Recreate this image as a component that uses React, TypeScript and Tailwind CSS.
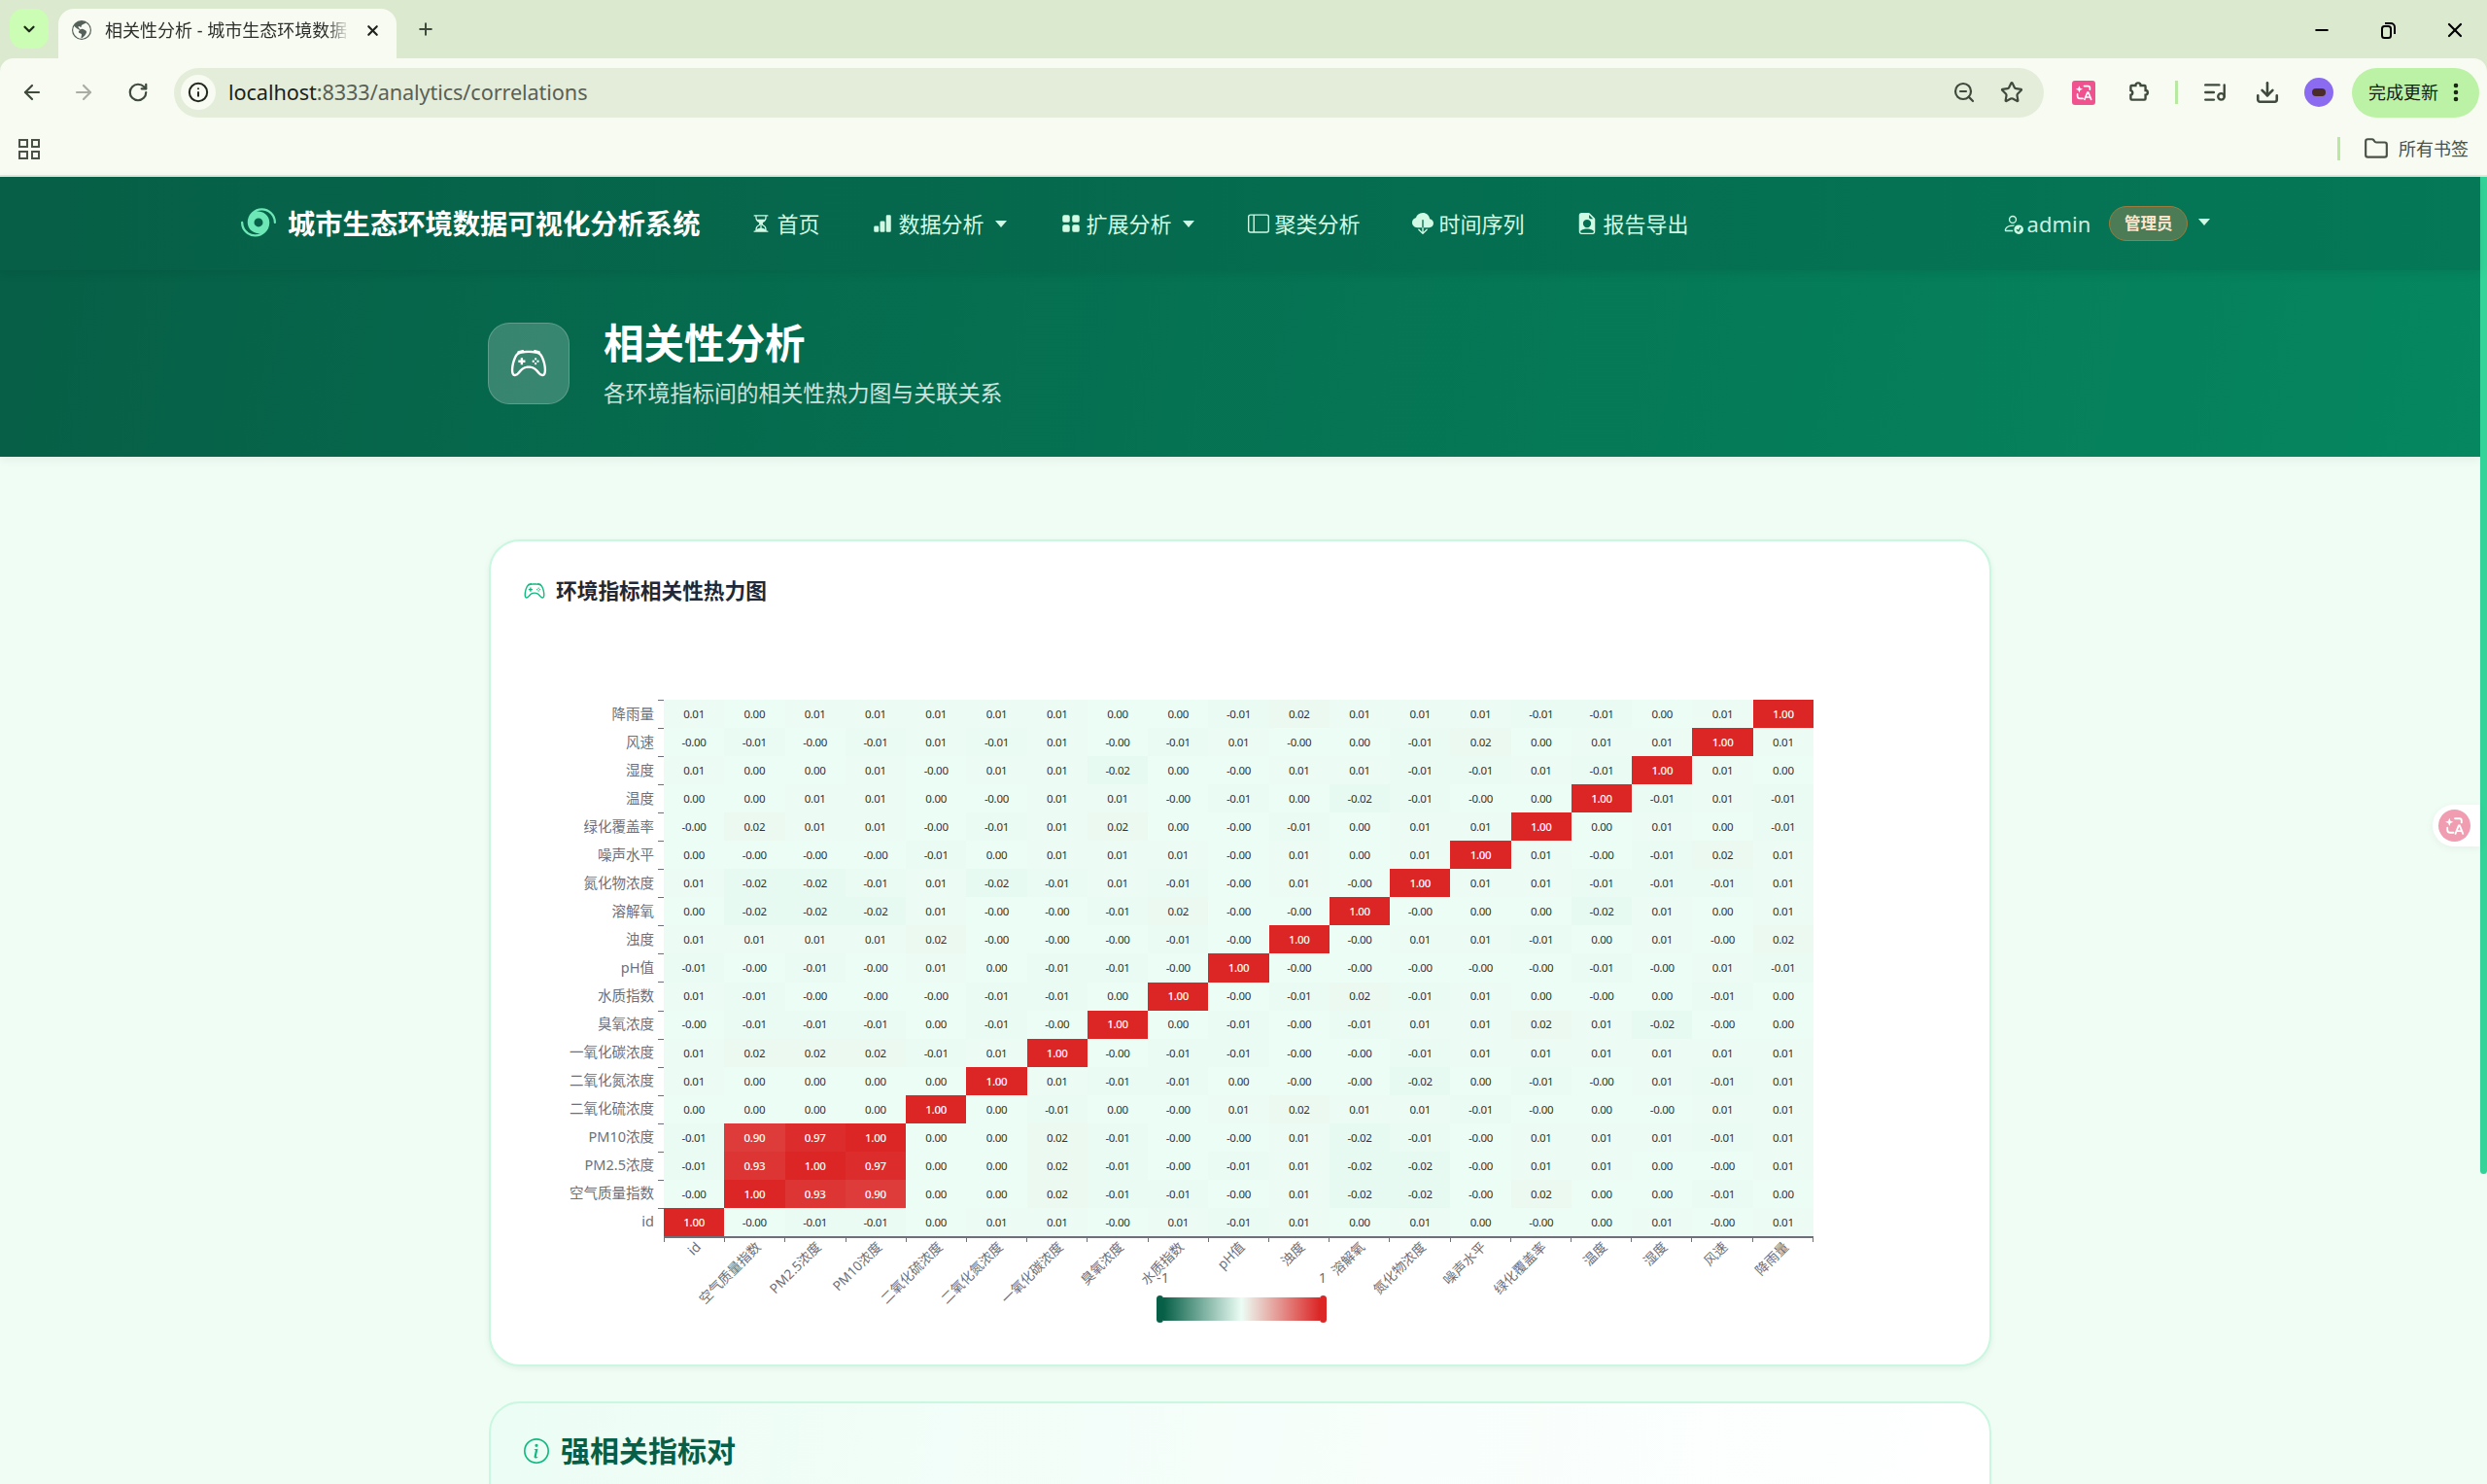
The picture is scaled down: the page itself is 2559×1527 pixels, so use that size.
import {
  ArrowLeft,
  ArrowRight,
  RotateCw,
  Info,
  ZoomOut,
  Star,
  ListMusic,
  Download,
  Folder,
  Plus,
  X,
  Minus,
  ChevronDown,
  EllipsisVertical,
} from "lucide-react";
import {
  BsHurricane,
  BsHourglassSplit,
  BsBarChartFill,
  BsGridFill,
  BsLayoutSidebar,
  BsCloudDownloadFill,
  BsFileEarmarkPersonFill,
  BsPersonCheck,
  BsController,
  BsInfoCircle,
  BsGlobeAmericas,
} from "react-icons/bs";

const yLabels = [
  "降雨量",
  "风速",
  "湿度",
  "温度",
  "绿化覆盖率",
  "噪声水平",
  "氮化物浓度",
  "溶解氧",
  "浊度",
  "pH值",
  "水质指数",
  "臭氧浓度",
  "一氧化碳浓度",
  "二氧化氮浓度",
  "二氧化硫浓度",
  "PM10浓度",
  "PM2.5浓度",
  "空气质量指数",
  "id",
];

const xLabels = [...yLabels].reverse();

const rows = [
  "0.01 0.00 0.01 0.01 0.01 0.01 0.01 0.00 0.00 -0.01 0.02 0.01 0.01 0.01 -0.01 -0.01 0.00 0.01 1.00",
  "-0.00 -0.01 -0.00 -0.01 0.01 -0.01 0.01 -0.00 -0.01 0.01 -0.00 0.00 -0.01 0.02 0.00 0.01 0.01 1.00 0.01",
  "0.01 0.00 0.00 0.01 -0.00 0.01 0.01 -0.02 0.00 -0.00 0.01 0.01 -0.01 -0.01 0.01 -0.01 1.00 0.01 0.00",
  "0.00 0.00 0.01 0.01 0.00 -0.00 0.01 0.01 -0.00 -0.01 0.00 -0.02 -0.01 -0.00 0.00 1.00 -0.01 0.01 -0.01",
  "-0.00 0.02 0.01 0.01 -0.00 -0.01 0.01 0.02 0.00 -0.00 -0.01 0.00 0.01 0.01 1.00 0.00 0.01 0.00 -0.01",
  "0.00 -0.00 -0.00 -0.00 -0.01 0.00 0.01 0.01 0.01 -0.00 0.01 0.00 0.01 1.00 0.01 -0.00 -0.01 0.02 0.01",
  "0.01 -0.02 -0.02 -0.01 0.01 -0.02 -0.01 0.01 -0.01 -0.00 0.01 -0.00 1.00 0.01 0.01 -0.01 -0.01 -0.01 0.01",
  "0.00 -0.02 -0.02 -0.02 0.01 -0.00 -0.00 -0.01 0.02 -0.00 -0.00 1.00 -0.00 0.00 0.00 -0.02 0.01 0.00 0.01",
  "0.01 0.01 0.01 0.01 0.02 -0.00 -0.00 -0.00 -0.01 -0.00 1.00 -0.00 0.01 0.01 -0.01 0.00 0.01 -0.00 0.02",
  "-0.01 -0.00 -0.01 -0.00 0.01 0.00 -0.01 -0.01 -0.00 1.00 -0.00 -0.00 -0.00 -0.00 -0.00 -0.01 -0.00 0.01 -0.01",
  "0.01 -0.01 -0.00 -0.00 -0.00 -0.01 -0.01 0.00 1.00 -0.00 -0.01 0.02 -0.01 0.01 0.00 -0.00 0.00 -0.01 0.00",
  "-0.00 -0.01 -0.01 -0.01 0.00 -0.01 -0.00 1.00 0.00 -0.01 -0.00 -0.01 0.01 0.01 0.02 0.01 -0.02 -0.00 0.00",
  "0.01 0.02 0.02 0.02 -0.01 0.01 1.00 -0.00 -0.01 -0.01 -0.00 -0.00 -0.01 0.01 0.01 0.01 0.01 0.01 0.01",
  "0.01 0.00 0.00 0.00 0.00 1.00 0.01 -0.01 -0.01 0.00 -0.00 -0.00 -0.02 0.00 -0.01 -0.00 0.01 -0.01 0.01",
  "0.00 0.00 0.00 0.00 1.00 0.00 -0.01 0.00 -0.00 0.01 0.02 0.01 0.01 -0.01 -0.00 0.00 -0.00 0.01 0.01",
  "-0.01 0.90 0.97 1.00 0.00 0.00 0.02 -0.01 -0.00 -0.00 0.01 -0.02 -0.01 -0.00 0.01 0.01 0.01 -0.01 0.01",
  "-0.01 0.93 1.00 0.97 0.00 0.00 0.02 -0.01 -0.00 -0.01 0.01 -0.02 -0.02 -0.00 0.01 0.01 0.00 -0.00 0.01",
  "-0.00 1.00 0.93 0.90 0.00 0.00 0.02 -0.01 -0.01 -0.00 0.01 -0.02 -0.02 -0.00 0.02 0.00 0.00 -0.01 0.00",
  "1.00 -0.00 -0.01 -0.01 0.00 0.01 0.01 -0.00 0.01 -0.01 0.01 0.00 0.01 0.00 -0.00 0.00 0.01 -0.00 0.01",
].map((r) => r.split(" "));

// same scale as the colour bar: #065f46 -> #ecfdf5 -> #dc2626
const cellColor = (v: number) => {
  const mid = [236, 253, 245];
  const end = v < 0 ? [6, 95, 70] : [220, 38, 38];
  const t = Math.min(Math.abs(v), 1);
  const c = mid.map((m, i) => Math.round(m + (end[i] - m) * t));
  return `rgb(${c[0]},${c[1]},${c[2]})`;
};

const TranslateGlyph = ({ className }: { className: string }) => (
  <svg viewBox="0 0 24 24" className={className} fill="none" stroke="#fff" strokeWidth="1.8">
    <path d="M7 4.5l1.1 2.9L11 8.5 8.1 9.6 7 12.5 5.9 9.6 3 8.5l2.9-1.1z" fill="#fff" stroke="none" />
    <path d="M12.5 5H17a2 2 0 0 1 2 2v2" strokeLinecap="round" />
    <path d="M5 14v2a3 3 0 0 0 3 3h3" strokeLinecap="round" />
    <path d="M13 20l3.2-8h1l3.2 8M14.2 17.4h5" strokeLinecap="round" />
  </svg>
);

const ToolbarChrome = () => (
  <div className="bg-[#dbe9cf] text-[#3f4a3c]">
    <div className="flex h-[60px] items-start">
      <div className="ml-[10px] mt-[9px] flex h-[41px] w-[40px] items-center justify-center rounded-[14px] bg-[#ccfdb4]">
        <ChevronDown className="h-[18px] w-[18px] text-[#1b2a18]" strokeWidth={3} />
      </div>
      <div className="ml-[10px] mt-[9px] flex h-[51px] w-[348px] items-center rounded-t-[16px] bg-[#f8fbf2] pb-[7px] pl-[14px]">
        <BsGlobeAmericas className="h-[20px] w-[20px] text-[#55605a]" />
        <span className="ml-[14px] w-[252px] overflow-hidden whitespace-nowrap text-[18px] leading-[24px] text-[#2d2f2b] [mask-image:linear-gradient(90deg,#000_90%,transparent)]">
          相关性分析 - 城市生态环境数据
        </span>
        <X className="ml-[15px] h-[17px] w-[17px] text-[#1f231e]" strokeWidth={3} />
      </div>
      <Plus className="ml-[20px] mt-[20px] h-[20px] w-[20px] text-[#3f4a3c]" strokeWidth={2.4} />
      <div className="ml-auto mt-[19px] flex items-center">
        <Minus className="mr-[48px] h-[20px] w-[20px] text-black" strokeWidth={2.4} />
        <svg viewBox="0 0 20 20" className="mr-[47px] h-[20px] w-[20px]" fill="none" stroke="#000" strokeWidth="2">
          <rect x="4" y="6" width="9" height="12" rx="2.5" />
          <path d="M7 3h6a4 4 0 0 1 4 4v7" />
        </svg>
        <X className="mr-[21px] h-[24px] w-[24px] text-black" strokeWidth={2.2} />
      </div>
    </div>
    <div className="flex h-[70px] items-center rounded-t-[14px] bg-[#f8fbf2]">
      <ArrowLeft className="ml-[21px] h-[24px] w-[24px]" strokeWidth={2.2} />
      <ArrowRight className="ml-[29px] h-[24px] w-[24px] text-[#a9aea5]" strokeWidth={2.2} />
      <RotateCw className="ml-[33px] h-[22px] w-[22px]" strokeWidth={2.4} />
      <div className="ml-[26px] flex h-[51px] w-[1924px] items-center rounded-full bg-[#e4edda] pl-[7px]">
        <span className="flex h-[36px] w-[36px] items-center justify-center rounded-full bg-[#f8fbf2]">
          <Info className="h-[22px] w-[22px] text-[#22281f]" strokeWidth={2.2} />
        </span>
        <span className="ml-[13px] text-[21.7px] tracking-[-0.1px] text-[#5a5f55]">
          <span className="text-[#1c1f1a]">localhost</span>:8333/analytics/correlations
        </span>
        <ZoomOut className="ml-auto mr-[25px] h-[24px] w-[24px]" strokeWidth={2.2} />
        <Star className="mr-[21px] h-[24px] w-[24px]" strokeWidth={2.2} />
      </div>
      <span className="ml-[29px] flex h-[25px] w-[24px] items-center justify-center rounded-[3px] bg-[#f0528f]">
        <TranslateGlyph className="h-[22px] w-[22px]" />
      </span>
      <svg viewBox="0 0 24 24" className="ml-[31px] h-[26px] w-[26px]" fill="none" stroke="currentColor" strokeWidth="2.2">
        <path d="M6 5.5h3.6a2.4 2.4 0 0 1 4.8 0H18a1 1 0 0 1 1 1v3.7a2.1 2.1 0 0 1 0 4.2v3.6a1 1 0 0 1-1 1H6a1 1 0 0 1-1-1v-3.5a2.2 2.2 0 0 0 0-4.3V6.500a1 1 0 0 1 1-1z" />
      </svg>
      <span className="ml-[25px] h-[24px] w-[3px] bg-[#b8e8a2]" />
      <ListMusic className="ml-[25px] h-[26px] w-[26px]" strokeWidth={2.2} />
      <Download className="ml-[28px] h-[26px] w-[26px]" strokeWidth={2.4} />
      <span className="ml-[25px] flex h-[30px] w-[30px] items-center justify-center rounded-full bg-[#8b6cf0]">
        <span className="h-[8px] w-[14px] rounded-full bg-[#4a2c2a]" />
      </span>
      <div className="ml-[19px] flex h-[51px] w-[131px] items-center rounded-full bg-[#bcf2a5] pl-[17px]">
        <span className="text-[18px] text-[#17210f]">完成更新</span>
        <EllipsisVertical className="ml-[6px] h-[24px] w-[24px] text-[#17210f]" strokeWidth={2.6} />
      </div>
    </div>
    <div className="flex h-[52px] items-center border-b-2 border-[#e3e6da] bg-[#f8fbf2] pb-[4px]">
      <div className="ml-[19px] grid h-[21px] w-[22px] grid-cols-2 gap-[3px]">
        <span className="border-2 border-[#4a5147]" />
        <span className="border-2 border-[#4a5147]" />
        <span className="border-2 border-[#4a5147]" />
        <span className="border-2 border-[#4a5147]" />
      </div>
      <span className="ml-auto h-[24px] w-[3px] bg-[#b8e8a2]" />
      <Folder className="ml-[24px] h-[26px] w-[26px] text-[#4a5147]" strokeWidth={2} />
      <span className="ml-[10px] mr-[19px] text-[18px] text-[#4a5147]">所有书签</span>
    </div>
  </div>
);

const navItemClass = "flex items-center gap-[6px] text-[22px] text-[#d1fae5]";
const Caret = () => (
  <span className="ml-[5px] border-x-[6px] border-t-[7px] border-x-transparent border-t-[#d1fae5]" />
);

const Navbar = () => (
  <nav className="relative z-10 flex h-[96px] items-center bg-[linear-gradient(90deg,#065f46,#047857)] pl-[248px] shadow-[0_3px_10px_rgba(0,0,0,0.08)]">
    <BsHurricane className="h-[36px] w-[36px] text-[#6ee7b7]" />
    <span className="ml-[12px] text-[28.3px] font-bold text-white">城市生态环境数据可视化分析系统</span>
    <a className={`${navItemClass} ml-[53px]`}>
      <BsHourglassSplit className="h-[20px] w-[20px]" />
      首页
    </a>
    <a className={`${navItemClass} ml-[55px]`}>
      <BsBarChartFill className="h-[20px] w-[20px]" />
      数据分析
      <Caret />
    </a>
    <a className={`${navItemClass} ml-[56px]`}>
      <BsGridFill className="h-[20px] w-[20px]" />
      扩展分析
      <Caret />
    </a>
    <a className={`${navItemClass} ml-[55px]`}>
      <BsLayoutSidebar className="h-[22px] w-[22px]" />
      聚类分析
    </a>
    <a className={`${navItemClass} ml-[53px]`}>
      <BsCloudDownloadFill className="h-[22px] w-[22px]" />
      时间序列
    </a>
    <a className={`${navItemClass} ml-[53px]`}>
      <BsFileEarmarkPersonFill className="h-[22px] w-[22px]" />
      报告导出
    </a>
    <div className="ml-[322px] flex items-center">
      <BsPersonCheck className="h-[22px] w-[22px] text-[#d1fae5]" />
      <span className="ml-[4px] text-[22px] text-[#c9efe0]">admin</span>
      <span className="ml-[19px] flex h-[36px] w-[81px] items-center justify-center rounded-full border border-[#a07a3a] bg-[#4c7c56] text-[16.5px] font-bold text-[#fde7cf]">
        管理员
      </span>
      <span className="ml-[11px] -mt-[4px] border-x-[6px] border-t-[7px] border-x-transparent border-t-[#d1fae5]" />
    </div>
  </nav>
);

const Hero = () => (
  <header className="flex h-[192px] items-center bg-[linear-gradient(100deg,#065f46,#05875f)] pl-[502px] shadow-[0_3px_10px_rgba(0,0,0,0.06)]">
    <div className="flex h-[84px] w-[84px] items-center justify-center rounded-[22px] border border-white/20 bg-white/20">
      <BsController className="h-[38px] w-[38px] text-white" />
    </div>
    <div className="ml-[35px] -mt-[2px] flex flex-col gap-[10px]">
      <h1 className="text-[41.5px] font-bold leading-[54px] text-white">相关性分析</h1>
      <p className="text-[22.8px] leading-[30px] text-white/80">各环境指标间的相关性热力图与关联关系</p>
    </div>
  </header>
);

const Heatmap = () => (
  <div className="ml-[172px]">
    <div className="flex">
      <div className="relative w-[6px]">
        <ul className="absolute right-[10px] top-0 flex h-[552px] flex-col text-[#6e7079]">
          {yLabels.map((label) => (
            <li key={label} className="flex flex-1 items-center justify-end whitespace-nowrap text-[14.5px]">
              {label}
            </li>
          ))}
        </ul>
        <div className="flex h-[552px] flex-col">
          {yLabels.map((label) => (
            <span key={label} className="flex-1 border-t border-[#6e7079]" />
          ))}
        </div>
      </div>
      <div className="grid h-[552px] w-[1183px] grid-cols-[repeat(19,minmax(0,1fr))] grid-rows-[repeat(19,minmax(0,1fr))]">
        {rows.flatMap((row, r) =>
          row.map((v, c) => {
            const n = parseFloat(v);
            return (
              <div
                key={`${r}-${c}`}
                className={`flex items-center justify-center text-[11.5px] tracking-[-0.3px] ${
                  n > 0.5 ? "font-medium text-white" : "text-[#333]"
                }`}
                style={{ backgroundColor: cellColor(n) }}
              >
                {v}
              </div>
            );
          })
        )}
      </div>
    </div>
    <div className="ml-[6px] flex h-[6px] w-[1183px] border-t-2 border-r border-[#6e7079]">
      {xLabels.map((label) => (
        <div key={label} className="relative flex-1 border-l border-[#6e7079]">
          <span className="absolute right-[calc(50%+3px)] top-0 origin-top-right -rotate-45 whitespace-nowrap text-[13.8px] leading-[18px] text-[#6e7079]">
            {label}
          </span>
        </div>
      ))}
    </div>
    <div className="ml-[513px] mt-[27px] flex w-[175px] flex-col">
      <div className="relative z-10 flex justify-between text-[14.5px] leading-[18px] text-[#6e7079]">
        <span>-1</span>
        <span>1</span>
      </div>
      <div className="mt-[10px] flex h-[28px] items-center">
        <span className="h-[28px] w-[7px] rounded-full bg-[#065f46]" />
        <span className="h-[24px] flex-1 bg-[linear-gradient(90deg,#065f46,#ecfdf5_50%,#dc2626)]" />
        <span className="h-[28px] w-[7px] rounded-full bg-[#dc2626]" />
      </div>
    </div>
  </div>
);

export default function App() {
  return (
    <div className="relative h-[1527px] overflow-hidden bg-[#f0fdf4] font-['Noto_Sans','Noto_Sans_CJK_SC',sans-serif]">
      <ToolbarChrome />
      <div className="flex">
        <div className="w-[2552px]">
          <Navbar />
          <Hero />
          <main className="flex flex-col items-center pt-[85px]">
            <section className="h-[851px] w-[1546px] rounded-[32px] border-2 border-[#c9f7e0] bg-white shadow-[0_2px_6px_rgba(6,95,70,0.08)]">
              <h2 className="flex items-center pl-[34px] pt-[34px] text-[21.7px] font-bold leading-[34px] text-[#1f2937]">
                <BsController className="h-[22px] w-[22px] text-[#10b981]" />
                <span className="ml-[11px]">环境指标相关性热力图</span>
              </h2>
              <div className="mt-[95px]">
                <Heatmap />
              </div>
            </section>
            <section className="mt-[36px] h-[200px] w-[1546px] rounded-t-[32px] border-2 border-[#c9f7e0] bg-[linear-gradient(100deg,#ecfdf5,#ffffff)]">
              <h2 className="flex items-center pl-[34px] pt-[29px] text-[30px] font-bold leading-[40px] text-[#065f46]">
                <BsInfoCircle className="h-[26px] w-[26px] text-[#10b981]" />
                <span className="ml-[12px]">强相关指标对</span>
              </h2>
            </section>
          </main>
        </div>
        <div className="w-[7px]">
          <div className="h-[1026px] w-[7px] rounded-b-[4px] bg-[#34d399]" />
        </div>
      </div>
      <div className="absolute right-[7px] top-[828px] flex h-[43px] w-[49px] items-center rounded-l-full bg-white pl-[6px] shadow-[0_2px_8px_rgba(0,0,0,0.05)]">
        <span className="flex h-[33px] w-[33px] items-center justify-center rounded-full bg-[#f09cb1]">
          <TranslateGlyph className="h-[25px] w-[25px]" />
        </span>
      </div>
    </div>
  );
}
